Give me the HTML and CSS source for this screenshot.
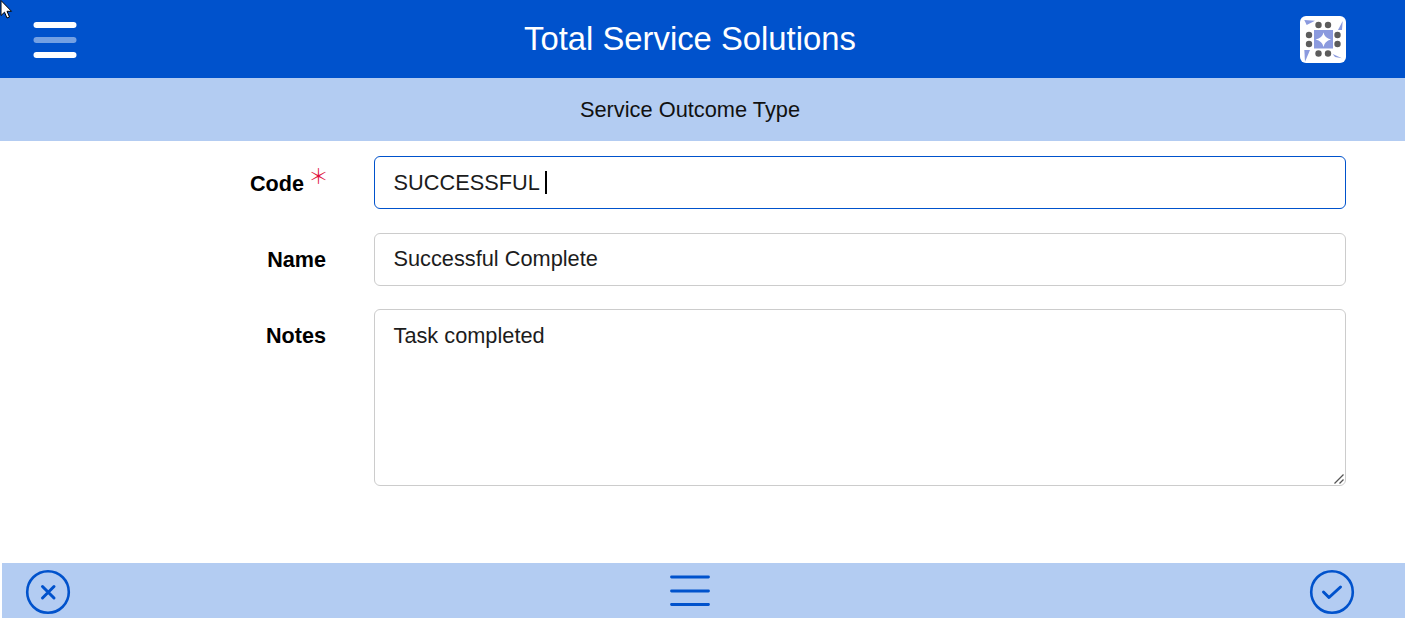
FILE: index.html
```html
<!DOCTYPE html>
<html lang="en">
<head>
<meta charset="utf-8">
<title>Total Service Solutions</title>
<link rel="stylesheet" href="styles.css">
</head>
<body>
<div class="page">
  <svg class="pointer" width="13" height="20" viewBox="0 0 13 20"><path d="M1 0.5V15.5L4.5 12.2L7 18L9.5 17L7 11.3H11.5Z" fill="#fff" stroke="#000" stroke-width="1"/></svg>
  <header class="topbar">
    <svg class="menu-icon" width="44" height="36" viewBox="0 0 44 36">
      <rect x="0.500" y="0" width="43" height="6" rx="3" fill="#fff"/>
      <rect x="0.500" y="15" width="43" height="6" rx="3" fill="#fff" opacity=".45"/>
      <rect x="0.500" y="30" width="43" height="6" rx="3" fill="#fff"/>
    </svg>
    <h1 class="title">Total Service Solutions</h1>
    <svg class="logo" width="46" height="47" viewBox="0 0 46 47">
      <rect width="46" height="47" rx="6" fill="#fff"/>
      <rect x="14" y="14" width="19" height="18.500" fill="#8b9ade"/>
      <path d="M23.500 16.500Q24.500 22 31 23.500Q24.500 25 23.500 31Q22.500 25 15.500 23.500Q22.500 22 23.500 16.500Z" fill="#fff"/>
      <g fill="#5c5c5c">
        <circle cx="18.500" cy="9" r="3.200"/><circle cx="28" cy="9" r="3.200"/>
        <circle cx="18.500" cy="37.500" r="3.200"/><circle cx="28" cy="37.500" r="3.200"/>
        <circle cx="9" cy="19" r="3.200"/><circle cx="9" cy="28" r="3.200"/>
        <circle cx="37.500" cy="19" r="3.200"/><circle cx="37.500" cy="28" r="3.200"/>
      </g>
      <g fill="#8b9ade">
        <path d="M4.300 4L15 4.700L6.700 9Z"/><path d="M42.700 5L42 14L38 14Z"/>
        <path d="M32.700 38L42 42.300L35 41Z"/><path d="M4.300 34L10 34L5 45.700Z"/>
      </g>
    </svg>
  </header>
  <div class="subbar">Service Outcome Type</div>
  <main class="form">
    <div class="row">
      <div class="label label-code">Code<span class="req">＊</span></div>
      <div class="control">
        <div class="field field-focus">SUCCESSFUL<span class="caret"></span></div>
      </div>
    </div>
    <div class="row row-name">
      <div class="label">Name</div>
      <div class="control"><div class="field">Successful Complete</div></div>
    </div>
    <div class="row">
      <div class="label">Notes</div>
      <div class="control">
        <div class="field field-area">Task completed
          <svg class="grip" width="12" height="12" viewBox="0 0 12 12"><path d="M1.500 10.500L10.500 1.500M6.500 10.500L10.500 6.500" stroke="#555" stroke-width="1.300" fill="none"/></svg>
        </div>
      </div>
    </div>
  </main>
  <footer class="bottombar">
    <svg width="46" height="46" viewBox="0 0 46 46" fill="none" stroke="#0052cc" stroke-width="2.600">
      <circle cx="23" cy="23" r="20.800"/>
      <path d="M17.500 17.500L29 29M29 17.500L17.500 29" stroke-width="3" stroke-linecap="round"/>
    </svg>
    <svg class="bars" width="40" height="34" viewBox="0 0 40 34" fill="none" stroke="#0052cc" stroke-width="2.800">
      <path d="M1.500 3H38.500M1.500 17H38.500M1.500 30.500H38.500" stroke-linecap="round"/>
    </svg>
    <svg width="46" height="46" viewBox="0 0 46 46" fill="none" stroke="#0052cc" stroke-width="2.600">
      <circle cx="23" cy="23" r="20.800"/>
      <path d="M14.500 23L20 28.500L31.500 18" stroke-width="3" stroke-linecap="round" stroke-linejoin="round"/>
    </svg>
  </footer>
</div>
</body>
</html>
```
FILE: styles.css
```css
* { box-sizing: border-box; }
html, body { margin: 0; padding: 0; background: #fff; }
body { font-family: "Liberation Sans", Arial, sans-serif; color: #111; }
.page { position: relative; width: 1405px; height: 619px; overflow: hidden; }
.pointer { position: absolute; left: 0; top: 0; z-index: 2; }
.topbar { height: 78px; background: #0052cc; display: flex; align-items: center; justify-content: space-between; padding: 0 59px 0 33px; position: relative; }
.menu-icon { margin-top: 2px; }
.title { position: absolute; left: 0; right: 25px; margin: 0; text-align: center; color: #fff; font-size: 32.800px; font-weight: 400; line-height: 78px; }
.logo { display: block; margin-top: 1px; }
.subbar { height: 63px; background: #b3ccf2; display: flex; align-items: center; justify-content: center; padding-right: 25px; font-size: 21.800px; }
.form { height: 422px; padding-top: 15px; }
.row { display: flex; margin-bottom: 24px; }
.row-name { margin-bottom: 23px; }
.label { width: 326px; text-align: right; font-size: 21.600px; font-weight: 700; padding-top: 14px; line-height: 26px; color: #000; flex: none; position: relative; }
.label-code { padding: 15px 22px 0 0; }
.req { position: absolute; left: 308px; top: 3px; font-family: "Noto Sans CJK JP", sans-serif; font-weight: 300; color: #e0103c; font-size: 21px; line-height: 32px; }
.control { margin-left: 48px; width: 972px; }
.field { height: 53px; border: 1px solid #ccc; border-radius: 6px; padding: 0 18.500px; font-size: 21.750px; line-height: 49px; color: #1c1c1c; background: #fff; position: relative; }
.field-focus { border-color: #0052cc; display: flex; line-height: 51px; }
.caret { width: 2px; height: 23px; background: #000; margin: 14px 0 0 5px; }
.field-area { height: 177px; position: relative; line-height: 51px; }
.grip { position: absolute; right: 0; bottom: 0; }
.bottombar { height: 55px; margin-left: 2px; padding: 3px 50px 0 22.500px; background: #b3ccf2; display: flex; align-items: center; justify-content: space-between; }
.bars { margin: -2px 0 0 0; }
```
